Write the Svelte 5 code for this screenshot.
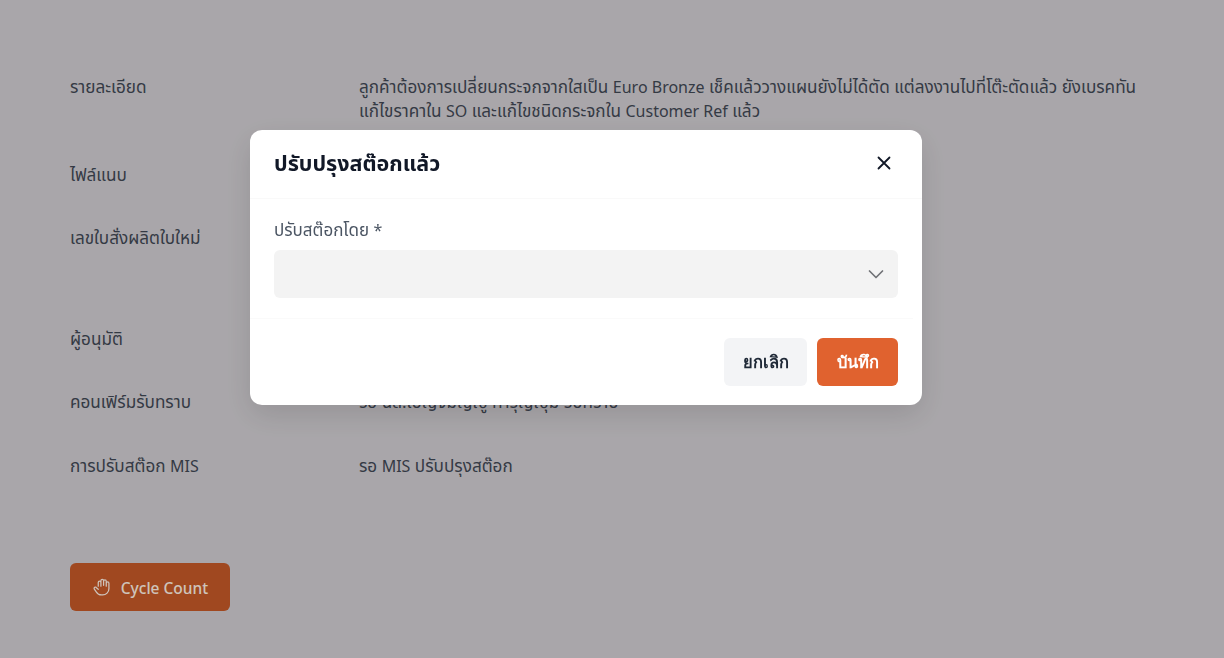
<script lang="ts">
const rows = [
  { label: "รายละเอียด", lines: ["ลูกค้าต้องการเปลี่ยนกระจกจากใสเป็น Euro Bronze เช็คแล้ววางแผนยังไม่ได้ตัด แต่ลงงานไปที่โต๊ะตัดแล้ว ยังเบรคทัน", "แก้ไขราคาใน SO และแก้ไขชนิดกระจกใน Customer Ref แล้ว"] },
  { label: "ไฟล์แนบ", lines: [""] },
  { label: "เลขใบสั่งผลิตใบใหม่", lines: [""], tall: true },
  { label: "ผู้อนุมัติ", lines: [""] },
  { label: "คอนเฟิร์มรับทราบ", lines: ["รอ นส.เบ็ญจมัญญู การุญญุม รับทราบ"] },
  { label: "การปรับสต๊อก MIS", lines: ["รอ MIS ปรับปรุงสต๊อก"] }
];

// the thai glyphs run a bit larger than the latin ones in this design
function split(text: string) {
  return text.split(/([A-Za-z*]+(?: [A-Za-z]+)*)/).filter(Boolean);
}
const isLatin = (part: string) => /^[A-Za-z*]/.test(part);
</script>

{#snippet mixed(text: string)}
  {#each split(text) as part}{#if isLatin(part)}<span class="latin">{part}</span>{:else}{part}{/if}{/each}
{/snippet}

<main class="page">
  <div class="details">
    {#each rows as row}
      <div class="row" class:tall={row.tall}>
        <div class="line">{@render mixed(row.label)}</div>
        <div class="value">
          {#each row.lines as line}
            <div class="line">{@render mixed(line)}</div>
          {/each}
        </div>
      </div>
    {/each}
  </div>

  <button class="cycle">
    <svg viewBox="0 0 24 24" width="20" height="20" fill="none" stroke="currentColor" stroke-width="1.5" stroke-linecap="round" stroke-linejoin="round">
      <path d="M7.500 11V6.500a1.600 1.600 0 0 1 3.200 0V11M10.700 10V4.500a1.600 1.600 0 0 1 3.200 0V10M13.900 10V5a1.600 1.600 0 0 1 3.200 0v6M17.100 11V7.500a1.600 1.600 0 0 1 3.200 0V14a7.500 7.500 0 0 1-7.500 7.500h-1.500a7 7 0 0 1-6-3.400L2.800 14.500a1.500 1.500 0 0 1 2.500-1.700l2.200 2" />
    </svg>
    Cycle Count
  </button>
</main>

<div class="overlay">
  <div class="dialog" role="dialog">
    <header>
      <h2>ปรับปรุงสต๊อกแล้ว</h2>
      <button class="close" aria-label="ปิด">
        <svg viewBox="0 0 14 14" width="14" height="14" fill="none" stroke="currentColor" stroke-width="1.8" stroke-linecap="round">
          <path d="M1.500 1.500l11 11M12.500 1.500l-11 11" />
        </svg>
      </button>
    </header>
    <div class="body">
      <div class="field-label">{@render mixed("ปรับสต๊อกโดย *")}</div>
      <div class="select">
        <svg viewBox="0 0 16 10" width="16" height="10" fill="none" stroke="currentColor" stroke-width="1.7" stroke-linecap="round" stroke-linejoin="round">
          <path d="M1.500 2l6.500 6.500L14.500 2" />
        </svg>
      </div>
    </div>
    <footer>
      <button class="cancel">ยกเลิก</button>
      <button class="save">บันทึก</button>
    </footer>
  </div>
</div>

<style>
  :global(body) {
    margin: 0;
    background: #c7c4c8;
    font-family: "Noto Sans", "Noto Sans Thai", "Inter", sans-serif;
  }

  .page {
    padding: 75px 70px 47px;
    color: #3e4551;
    font-size: 17.15px;
    line-height: 24px;
  }

  .details {
    display: flex;
    flex-direction: column;
    gap: 39.5px;
  }

  .row {
    display: grid;
    grid-template-columns: 289px 1fr;
  }

  .row.tall {
    min-height: 61px;
  }

  .line {
    height: 24px;
    white-space: nowrap;
  }

  .latin {
    font-size: 16px;
  }

  .cycle {
    display: flex;
    align-items: center;
    justify-content: center;
    gap: 9px;
    width: 160px;
    height: 48px;
    margin-top: 85px;
    padding: 2px 0 0;
    border: none;
    border-radius: 6px;
    background: #bc5526;
    color: #f3e6dc;
    font: 500 15.5px "Noto Sans", sans-serif;
  }

  .cycle svg {
    margin-top: -2px;
  }

  .overlay {
    position: fixed;
    inset: 0;
    background: rgba(0, 0, 0, 0.15);
  }

  .dialog {
    position: absolute;
    left: 250px;
    top: 130px;
    width: 672px;
    background: #fff;
    border-radius: 12px;
    box-shadow: 0 10px 30px rgba(0, 0, 0, 0.12);
  }

  header {
    display: flex;
    align-items: center;
    justify-content: space-between;
    height: 68px;
    padding: 0 31px 0 24px;
    border-bottom: 1px solid #f9f9f9;
  }

  h2 {
    margin: 0;
    font-size: 21.5px;
    font-weight: 700;
    color: #111827;
  }

  .close {
    display: flex;
    margin-top: -2px;
    padding: 0;
    border: none;
    background: none;
    color: #111827;
  }

  .body {
    margin-right: 9px;
    padding: 19px 15px 20px 24px;
    border-bottom: 1px solid #fafafa;
  }

  .field-label {
    font-size: 17px;
    line-height: 24px;
    color: #4b5563;
    margin-bottom: 8px;
  }

  .select {
    display: flex;
    align-items: center;
    justify-content: flex-end;
    height: 48px;
    padding-right: 14px;
    border-radius: 6px;
    background: #f3f3f3;
    color: #707276;
  }

  footer {
    display: flex;
    justify-content: flex-end;
    gap: 10px;
    padding: 19px 24px;
  }

  footer button {
    height: 48px;
    border: none;
    border-radius: 6px;
    font: 600 16.5px "Noto Sans", "Inter", sans-serif;
  }

  .cancel {
    width: 83px;
    background: #f3f4f6;
    color: #1f2937;
  }

  .save {
    width: 81px;
    background: #e0622f;
    color: #fff;
  }
</style>
